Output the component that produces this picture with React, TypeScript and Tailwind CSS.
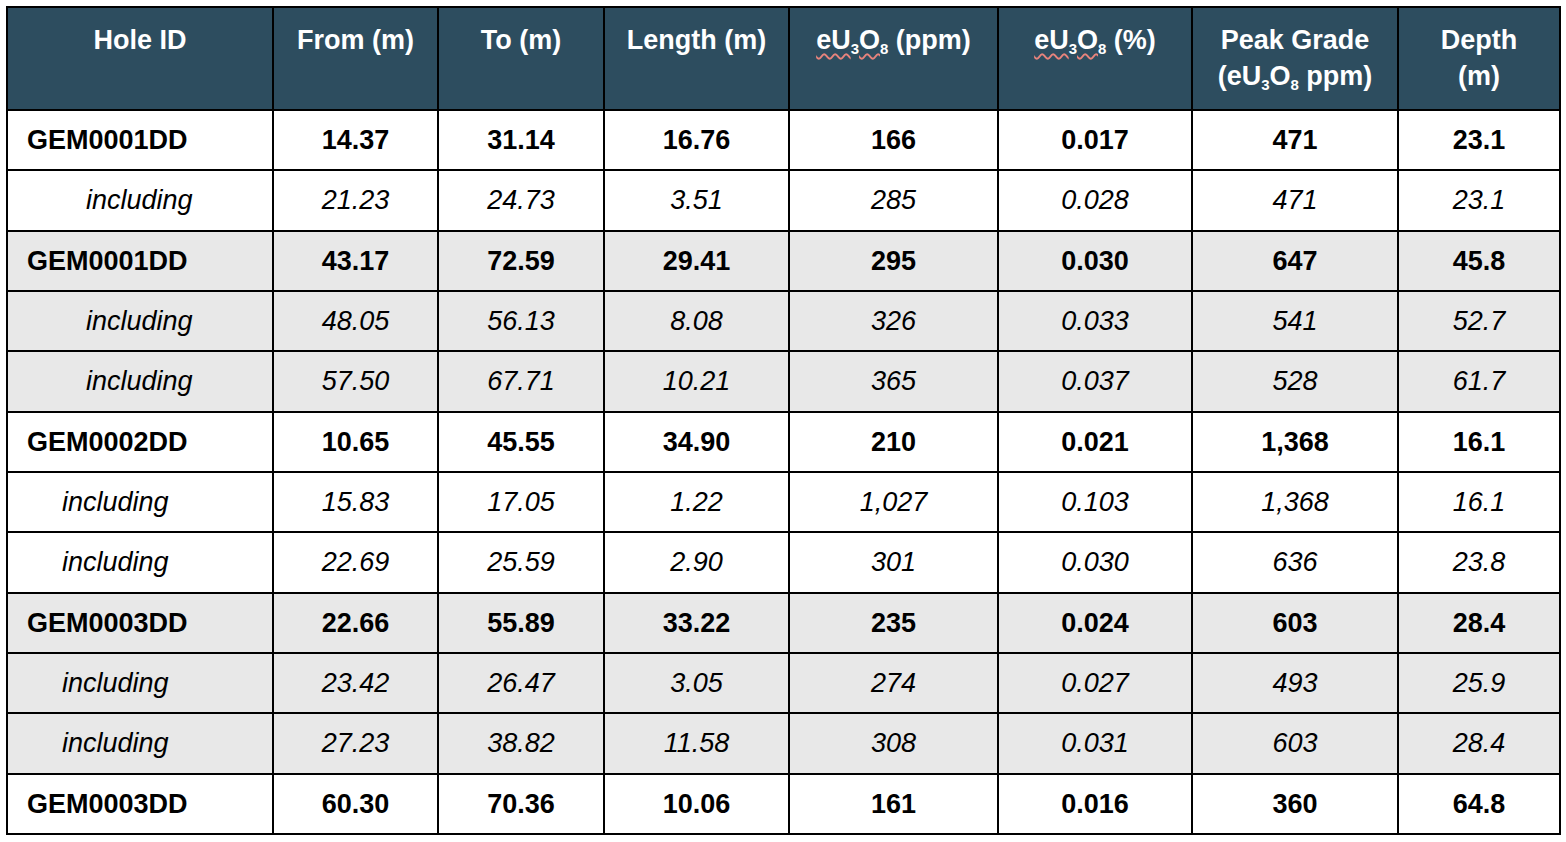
import React from "react";

type Row = {
  id: string;
  sub?: "deep" | "shallow";
  shade: boolean;
  vals: string[];
};

const rows: Row[] = [
  { id: "GEM0001DD", shade: false, vals: ["14.37", "31.14", "16.76", "166", "0.017", "471", "23.1"] },
  { id: "including", sub: "deep", shade: false, vals: ["21.23", "24.73", "3.51", "285", "0.028", "471", "23.1"] },
  { id: "GEM0001DD", shade: true, vals: ["43.17", "72.59", "29.41", "295", "0.030", "647", "45.8"] },
  { id: "including", sub: "deep", shade: true, vals: ["48.05", "56.13", "8.08", "326", "0.033", "541", "52.7"] },
  { id: "including", sub: "deep", shade: true, vals: ["57.50", "67.71", "10.21", "365", "0.037", "528", "61.7"] },
  { id: "GEM0002DD", shade: false, vals: ["10.65", "45.55", "34.90", "210", "0.021", "1,368", "16.1"] },
  { id: "including", sub: "shallow", shade: false, vals: ["15.83", "17.05", "1.22", "1,027", "0.103", "1,368", "16.1"] },
  { id: "including", sub: "shallow", shade: false, vals: ["22.69", "25.59", "2.90", "301", "0.030", "636", "23.8"] },
  { id: "GEM0003DD", shade: true, vals: ["22.66", "55.89", "33.22", "235", "0.024", "603", "28.4"] },
  { id: "including", sub: "shallow", shade: true, vals: ["23.42", "26.47", "3.05", "274", "0.027", "493", "25.9"] },
  { id: "including", sub: "shallow", shade: true, vals: ["27.23", "38.82", "11.58", "308", "0.031", "603", "28.4"] },
  { id: "GEM0003DD", shade: false, vals: ["60.30", "70.36", "10.06", "161", "0.016", "360", "64.8"] },
];

function Oxide({ squiggle }: { squiggle?: boolean }) {
  return (
    <span className={squiggle ? "underline decoration-wavy decoration-[#e8837c] decoration-[1.5px] underline-offset-[4px]" : ""}>
      eU<sub className="text-[15px] align-[-1px]">3</sub>O<sub className="text-[15px] align-[-1px]">8</sub>
    </span>
  );
}

const th = "border-2 border-black align-top pt-[14px] text-center font-bold text-white text-[27px] leading-[36px]";
const td = "border-2 border-black h-[60.35px] text-center";

export default function App() {
  return (
    <div className="min-h-screen bg-white p-[6px] font-['Liberation_Sans',Arial,sans-serif] text-[27px] text-black">
      <table className="table-fixed border-collapse w-[1553px]">
        <colgroup>
          <col className="w-[266px]" />
          <col className="w-[165px]" />
          <col className="w-[166px]" />
          <col className="w-[185px]" />
          <col className="w-[209px]" />
          <col className="w-[194px]" />
          <col className="w-[206px]" />
          <col className="w-[162px]" />
        </colgroup>
        <thead>
          <tr className="bg-[#2d4d5f] h-[103px]">
            <th className={th}>Hole ID</th>
            <th className={th}>From (m)</th>
            <th className={th}>To (m)</th>
            <th className={th}>Length (m)</th>
            <th className={th}>
              <Oxide squiggle /> (ppm)
            </th>
            <th className={th}>
              <Oxide squiggle /> (%)
            </th>
            <th className={th}>
              Peak Grade
              <br />
              (<Oxide /> ppm)
            </th>
            <th className={th}>
              Depth
              <br />
              (m)
            </th>
          </tr>
        </thead>
        <tbody>
          {rows.map((r, i) => {
            const bold = !r.sub;
            const style = bold ? "font-bold" : "italic";
            return (
              <tr key={i} className={r.shade ? "bg-[#e8e8e8]" : "bg-white"}>
                <td
                  className={`${td} text-left ${style} ${
                    r.sub === "deep" ? "pl-[78px]" : r.sub === "shallow" ? "pl-[54px]" : "pl-[19px]"
                  }`}
                >
                  {r.id}
                </td>
                {r.vals.map((v, j) => (
                  <td key={j} className={`${td} ${style}`}>
                    {v}
                  </td>
                ))}
              </tr>
            );
          })}
        </tbody>
      </table>
    </div>
  );
}
